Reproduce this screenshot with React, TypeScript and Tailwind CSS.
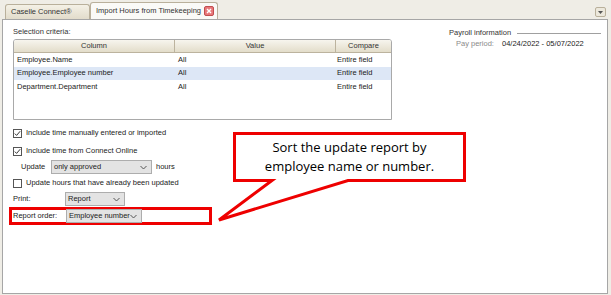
import React from "react";

const Chevron = () => (
  <svg width="7" height="5" viewBox="0 0 7 5" className="shrink-0">
    <path d="M0.5 1 L3.5 4 L6.5 1" fill="none" stroke="#555" strokeWidth="1" />
  </svg>
);

const Select = ({ text, w }: { text: string; w: string }) => (
  <div className={`${w} h-[14px] bg-[#e3e3e3] border border-[#adadad] flex items-center justify-between pl-[2px] pr-[4px] text-[7.5px] leading-none text-[#222] whitespace-nowrap`}>
    <span>{text}</span>
    <Chevron />
  </div>
);

const Check = ({ checked }: { checked?: boolean }) => (
  <div className="w-[9px] h-[9px] border border-[#555] bg-white flex items-center justify-center shrink-0">
    {checked && (
      <svg width="7" height="7" viewBox="0 0 7 7">
        <path d="M0.8 3.6 L2.6 5.4 L6.2 1.2" fill="none" stroke="#333" strokeWidth="1" />
      </svg>
    )}
  </div>
);

export default function App() {
  const rows = [
    ["Employee.Name", "All", "Entire field", false],
    ["Employee.Employee number", "All", "Entire field", true],
    ["Department.Department", "All", "Entire field", false],
  ] as const;
  return (
    <div
      className="relative w-[611px] h-[295px] overflow-hidden bg-[#efede6] text-[7.5px] leading-[10px] text-[#222] whitespace-nowrap"
      style={{ fontFamily: '"Liberation Sans", Arial, sans-serif' }}
    >
      {/* tab strip */}
      <div className="h-[19px] flex items-end pl-[5px] relative">
        <div className="w-[85px] h-[15px] border border-b-0 border-[#b9b09b] rounded-t-[3px] bg-gradient-to-b from-[#f4f1e6] to-[#e2dccb] flex items-center pl-[5px] text-[#333]">
          Caselle Connect®
        </div>
        <div className="w-[128px] h-[17px] border border-b-0 border-[#b9b09b] rounded-t-[3px] bg-[#fafaf7] flex items-center pl-[5px] text-[#333]">
          <span>Import Hours from Timekeeping</span>
          <div className="ml-auto mr-[3px] w-[10px] h-[10px] rounded-[2px] bg-[#e8787a] border border-[#c14d4f] flex items-center justify-center">
            <svg width="6" height="6" viewBox="0 0 6 6">
              <path d="M1 1 L5 5 M5 1 L1 5" stroke="#fff" strokeWidth="1.4" />
            </svg>
          </div>
        </div>
        <div className="ml-auto mr-[5px] mb-[2px] w-[11px] h-[10px] border border-[#b9b09b] rounded-[2px] bg-[#ece8dc] flex items-center justify-center">
          <svg width="5" height="3" viewBox="0 0 5 3">
            <path d="M0 0 L5 0 L2.5 3 Z" fill="#555" />
          </svg>
        </div>
      </div>

      {/* main panel */}
      <div className="mx-[2px] w-[606px] h-[275px] bg-white border border-[#a6a6a6] flex">
        <div className="w-[389px] pl-[10px] pt-[7px] flex flex-col">
          <div className="text-[#333]">Selection criteria:</div>
          <div className="mt-[2px] w-[379px] h-[81px] border border-[#a9a9a9] rounded-t-[3px] overflow-hidden">
            <div className="flex h-[13px] bg-gradient-to-b from-[#f7f5ee] to-[#e3ddca] border-b border-[#bcb39e] text-[#333]">
              <div className="w-[161px] border-r border-[#bcb39e] flex items-center justify-center">Column</div>
              <div className="w-[161px] border-r border-[#bcb39e] flex items-center justify-center">Value</div>
              <div className="flex-1 flex items-center justify-center">Compare</div>
            </div>
            {rows.map(([a, b, c, sel]) => (
              <div key={a} className={`flex h-[13.5px] items-center ${sel ? "bg-[#dde7f6]" : ""}`}>
                <div className="w-[161px] pl-[3px]">{a}</div>
                <div className="w-[161px] pl-[3px]">{b}</div>
                <div className="flex-1 pl-[1px]">{c}</div>
              </div>
            ))}
          </div>

          <div className="mt-[8px] flex items-center gap-[4px] h-[10px]">
            <Check checked />
            <span>Include time manually entered or imported</span>
          </div>
          <div className="mt-[8px] flex items-center gap-[4px] h-[10px]">
            <Check checked />
            <span>Include time from Connect Online</span>
          </div>
          <div className="mt-[4px] flex items-center h-[14px] pl-[8px]">
            <span className="w-[30px]">Update</span>
            <Select text="only approved" w="w-[101px]" />
            <span className="ml-[4px]">hours</span>
          </div>
          <div className="mt-[4px] flex items-center gap-[4px] h-[10px]">
            <Check />
            <span>Update hours that have already been updated</span>
          </div>
          <div className="mt-[4px] flex items-center h-[14px]">
            <span className="w-[52px]">Print:</span>
            <Select text="Report" w="w-[60px]" />
          </div>
          <div className="-ml-[4px] mt-[1px] w-[203px] h-[18px] border-[3px] border-[#ee0000] flex items-center pl-[1px]">
            <span className="w-[53px]">Report order:</span>
            <Select text="Employee number" w="w-[76px]" />
          </div>
        </div>

        <div className="ml-[57px] w-[152px] pt-[8px]">
          <div className="flex items-center">
            <span className="text-[#333]">Payroll information</span>
            <div className="ml-[6px] flex-1 h-px bg-[#a0a0a0]" />
          </div>
          <div className="mt-[1px] flex pl-[7px]">
            <span className="text-[#8a8a8a] w-[46px]">Pay period:</span>
            <span className="text-[#222]">04/24/2022 - 05/07/2022</span>
          </div>
        </div>
      </div>

      {/* callout overlay */}
      <svg className="absolute left-0 top-0 pointer-events-none" width="611" height="295">
        <path
          d="M234.5 133.5 H464.5 V180.5 H348 L219 220 L272 180.5 H234.5 Z"
          fill="#fff"
          stroke="#ee0000"
          strokeWidth="3"
          strokeLinejoin="miter"
        />
      </svg>
      <div
        className="absolute left-[236px] top-[138px] w-[227px] text-center text-[13px] leading-[19px] text-black"
        style={{ fontFamily: '"Open Sans", "Noto Sans", sans-serif' }}
      >
        Sort the update report by
        <br />
        employee name or number.
      </div>
    </div>
  );
}
